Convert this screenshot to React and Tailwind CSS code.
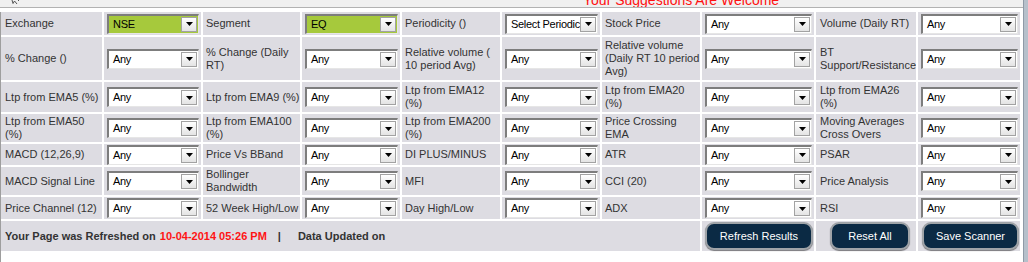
import React from 'react';

const rows = [
  [['Exchange'], { v: 'NSE', green: true }, ['Segment'], { v: 'EQ', green: true }, ['Periodicity ()'], { v: 'Select Periodicity' }, ['Stock Price'], { v: 'Any' }, ['Volume (Daily RT)'], { v: 'Any' }],
  [['% Change ()'], { v: 'Any' }, ['% Change (Daily', 'RT)'], { v: 'Any' }, ['Relative volume (', '10 period Avg)'], { v: 'Any' }, ['Relative volume', '(Daily RT 10 period', 'Avg)'], { v: 'Any' }, ['BT', 'Support/Resistance'], { v: 'Any' }],
  [['Ltp from EMA5 (%)'], { v: 'Any' }, ['Ltp from EMA9 (%)'], { v: 'Any' }, ['Ltp from EMA12', '(%)'], { v: 'Any' }, ['Ltp from EMA20', '(%)'], { v: 'Any' }, ['Ltp from EMA26', '(%)'], { v: 'Any' }],
  [['Ltp from EMA50', '(%)'], { v: 'Any' }, ['Ltp from EMA100', '(%)'], { v: 'Any' }, ['Ltp from EMA200', '(%)'], { v: 'Any' }, ['Price Crossing', 'EMA'], { v: 'Any' }, ['Moving Averages', 'Cross Overs'], { v: 'Any' }],
  [['MACD (12,26,9)'], { v: 'Any' }, ['Price Vs BBand'], { v: 'Any' }, ['DI PLUS/MINUS'], { v: 'Any' }, ['ATR'], { v: 'Any' }, ['PSAR'], { v: 'Any' }],
  [['MACD Signal Line'], { v: 'Any' }, ['Bollinger', 'Bandwidth'], { v: 'Any' }, ['MFI'], { v: 'Any' }, ['CCI (20)'], { v: 'Any' }, ['Price Analysis'], { v: 'Any' }],
  [['Price Channel (12)'], { v: 'Any' }, ['52 Week High/Low'], { v: 'Any' }, ['Day High/Low'], { v: 'Any' }, ['ADX'], { v: 'Any' }, ['RSI'], { v: 'Any' }],
];

// left padding per label column (cols 0,2,4,6,8)
const labelPad = ['pl-[4px]', '', 'pl-[3px]', '', 'pl-[3px]', '', 'pl-[3px]', '', 'pl-[4px]'];

const FakeSelect = ({ value, green }) => (
  <div
    className={`flex h-[20px] w-full items-center border-t-2 border-l-2 border-[#7d7d7d] border-b border-r border-b-[#e6e6e6] border-r-[#e6e6e6] ${green ? 'bg-[#a6c93c]' : 'bg-white'}`}
  >
    <span className="flex-1 overflow-hidden whitespace-nowrap pl-[4px] text-[11px] leading-[17px] tracking-[-0.3px] text-black">
      {value}
    </span>
    <span className="mr-[1px] flex h-[15px] w-[16px] shrink-0 items-center justify-center border border-[#a2a2a2] bg-gradient-to-b from-white to-[#e4e4e4]">
      <svg width="7" height="4" viewBox="0 0 7 4">
        <polygon points="0,0 7,0 3.5,4" fill="#000" />
      </svg>
    </span>
  </div>
);

const NavyButton = ({ children, className }) => (
  <button
    className={`h-[28px] rounded-[9px] border-2 border-[#a0a4a8] bg-[#0b2a44] text-[11px] text-white shadow-[0_1px_1px_rgba(0,0,0,0.45)] ${className}`}
  >
    {children}
  </button>
);

export default function App() {
  return (
    <div className="flex h-[262px] w-[1028px] bg-white font-['Liberation_Sans',Arial,sans-serif]">
      <div className="flex w-[1023px] flex-col">
        {/* top strip, mostly scrolled away */}
        <div className="flex h-[8px] items-start overflow-hidden border-b border-[#b2b2b2] bg-[#f0f0f0]">
          <svg className="ml-[10px] mt-[-4px]" width="10" height="9" viewBox="0 0 10 9" fill="none" stroke="#555" strokeWidth="1">
            <path d="M1 0.5 L3 7.5 L4.5 5 L7 8" />
            <path d="M6 2 L9 5" />
          </svg>
          <span className="ml-[563px] mt-[-8px] whitespace-nowrap text-[14px] leading-[16px] text-[#ff1010]">
            Your Suggestions Are Welcome
          </span>
        </div>

        <div className="mt-[4px] flex-1 border-l border-[#9e9e9e]">
          <div className="grid grid-cols-[101px_97px_97px_98px_98px_98px_98px_112px_100px_102px] grid-rows-[23px_43px_30px_28px_21px_28px_22px_30px] gap-[2px] bg-white">
            {rows.map((row, r) =>
              row.map((cell, c) =>
                Array.isArray(cell) ? (
                  <div
                    key={`${r}-${c}`}
                    className={`flex items-center overflow-hidden whitespace-nowrap bg-[#dddce2] text-[11px] leading-[13px] text-[#333] ${labelPad[c]}`}
                  >
                    <div>
                      {cell.map((line, i) => (
                        <div key={i}>{line}</div>
                      ))}
                    </div>
                  </div>
                ) : (
                  <div key={`${r}-${c}`} className="flex items-center bg-[#dddce2] pl-[3px] pr-[2px]">
                    <FakeSelect value={cell.v} green={cell.green} />
                  </div>
                )
              )
            )}

            {/* footer row */}
            <div className="col-span-7 flex items-center whitespace-nowrap bg-[#dddce2] pl-[4px] text-[11px] font-bold text-[#333]">
              <span>Your Page was Refreshed on</span>
              <span className="ml-[4px] text-[#ff1414]">10-04-2014 05:26 PM</span>
              <span className="ml-[11px]">|</span>
              <span className="ml-[17px]">Data Updated on</span>
            </div>
            <div className="flex items-center bg-[#dddce2] pl-[3px]">
              <NavyButton className="w-[108px]">Refresh Results</NavyButton>
            </div>
            <div className="flex items-center bg-[#dddce2] pl-[14px]">
              <NavyButton className="w-[80px]">Reset All</NavyButton>
            </div>
            <div className="flex items-center bg-[#dddce2] pl-[4px]">
              <NavyButton className="w-[97px]">Save Scanner</NavyButton>
            </div>
          </div>
        </div>
      </div>
      <div className="w-[5px] border-l border-[#8f9aa6] bg-[#b6c0cb]" />
    </div>
  );
}
